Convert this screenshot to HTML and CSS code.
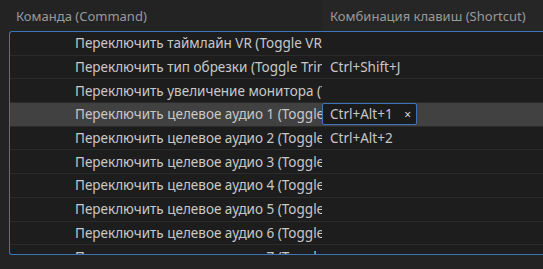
FILE: index.html
```html
<!DOCTYPE html>
<html lang="ru">
<head>
  <meta charset="UTF-8">
  <title>Сочетания клавиш</title>
  <link rel="stylesheet" href="styles.css">
</head>
<body>
  <div class="header">
    <div class="head-cmd">Команда (Command)</div>
    <div class="head-key">Комбинация клавиш (Shortcut)</div>
  </div>

  <div class="list">
    <div class="row"><div class="cmd">Переключить таймлайн VR (Toggle VR Timeline)</div><div class="key"></div></div>
    <div class="row"><div class="cmd">Переключить тип обрезки (Toggle Trim Type)</div><div class="key">Ctrl+Shift+J</div></div>
    <div class="row"><div class="cmd">Переключить увеличение монитора (Toggle Monitor Zoom)</div><div class="key"></div></div>
    <div class="row selected">
      <div class="cmd">Переключить целевое аудио 1 (Toggle Audio Target 1)</div>
      <div class="key">
        <div class="edit"><span>Ctrl+Alt+1</span><span class="clear">×</span></div>
      </div>
    </div>
    <div class="row"><div class="cmd">Переключить целевое аудио 2 (Toggle Audio Target 2)</div><div class="key">Ctrl+Alt+2</div></div>
    <div class="row"><div class="cmd">Переключить целевое аудио 3 (Toggle Audio Target 3)</div><div class="key"></div></div>
    <div class="row"><div class="cmd">Переключить целевое аудио 4 (Toggle Audio Target 4)</div><div class="key"></div></div>
    <div class="row"><div class="cmd">Переключить целевое аудио 5 (Toggle Audio Target 5)</div><div class="key"></div></div>
    <div class="row"><div class="cmd">Переключить целевое аудио 6 (Toggle Audio Target 6)</div><div class="key"></div></div>
    <div class="row"><div class="cmd">Переключить целевое аудио 7 (Toggle Audio Target 7)</div><div class="key"></div></div>
  </div>
</body>
</html>
```

FILE: styles.css
```css
body {
  margin: 0;
  background-color: #232323;
  font-family: 'Noto Sans', sans-serif;
  font-size: 13px;
  color: #c8c8c8;
  overflow: hidden;
}
.header {
  display: flex;
  height: 31px;
  align-items: center;
  color: #9a9a9a;
}
.head-cmd {
  width: 306px;
  padding-left: 16px;
}
.head-key {
  flex: 1;
  padding-left: 8px;
  height: 100%;
  display: flex;
  align-items: center;
  background-color: #262626;
}
.list {
  margin-left: 9px;
  height: 222px;
  border: 1px solid #3d76b8;
  border-right: none;
  border-radius: 3px 0 0 3px;
  background-color: #1d1d1d;
  font-size: 13.5px;
  overflow: hidden;
}
.row {
  display: flex;
  height: 23.7px;
  box-sizing: border-box;
  border-bottom: 1px solid #2b2b2b;
  align-items: center;
}
.row.selected {
  background-color: #414141;
}
.cmd {
  width: 247px;
  padding-left: 65px;
  white-space: nowrap;
  overflow: hidden;
}
.key {
  flex: 1;
  padding-left: 8px;
  display: flex;
  align-items: center;
}
.edit {
  margin-left: -8px;
  width: 86px;
  height: 20px;
  padding-left: 7px;
  display: flex;
  align-items: center;
  justify-content: space-between;
  border: 1px solid #3d76b8;
  border-radius: 2px;
  background-color: #1b1b1b;
}
.clear {
  color: #d8d8d8;
  font-size: 12px;
  padding-right: 5px;
}
```
